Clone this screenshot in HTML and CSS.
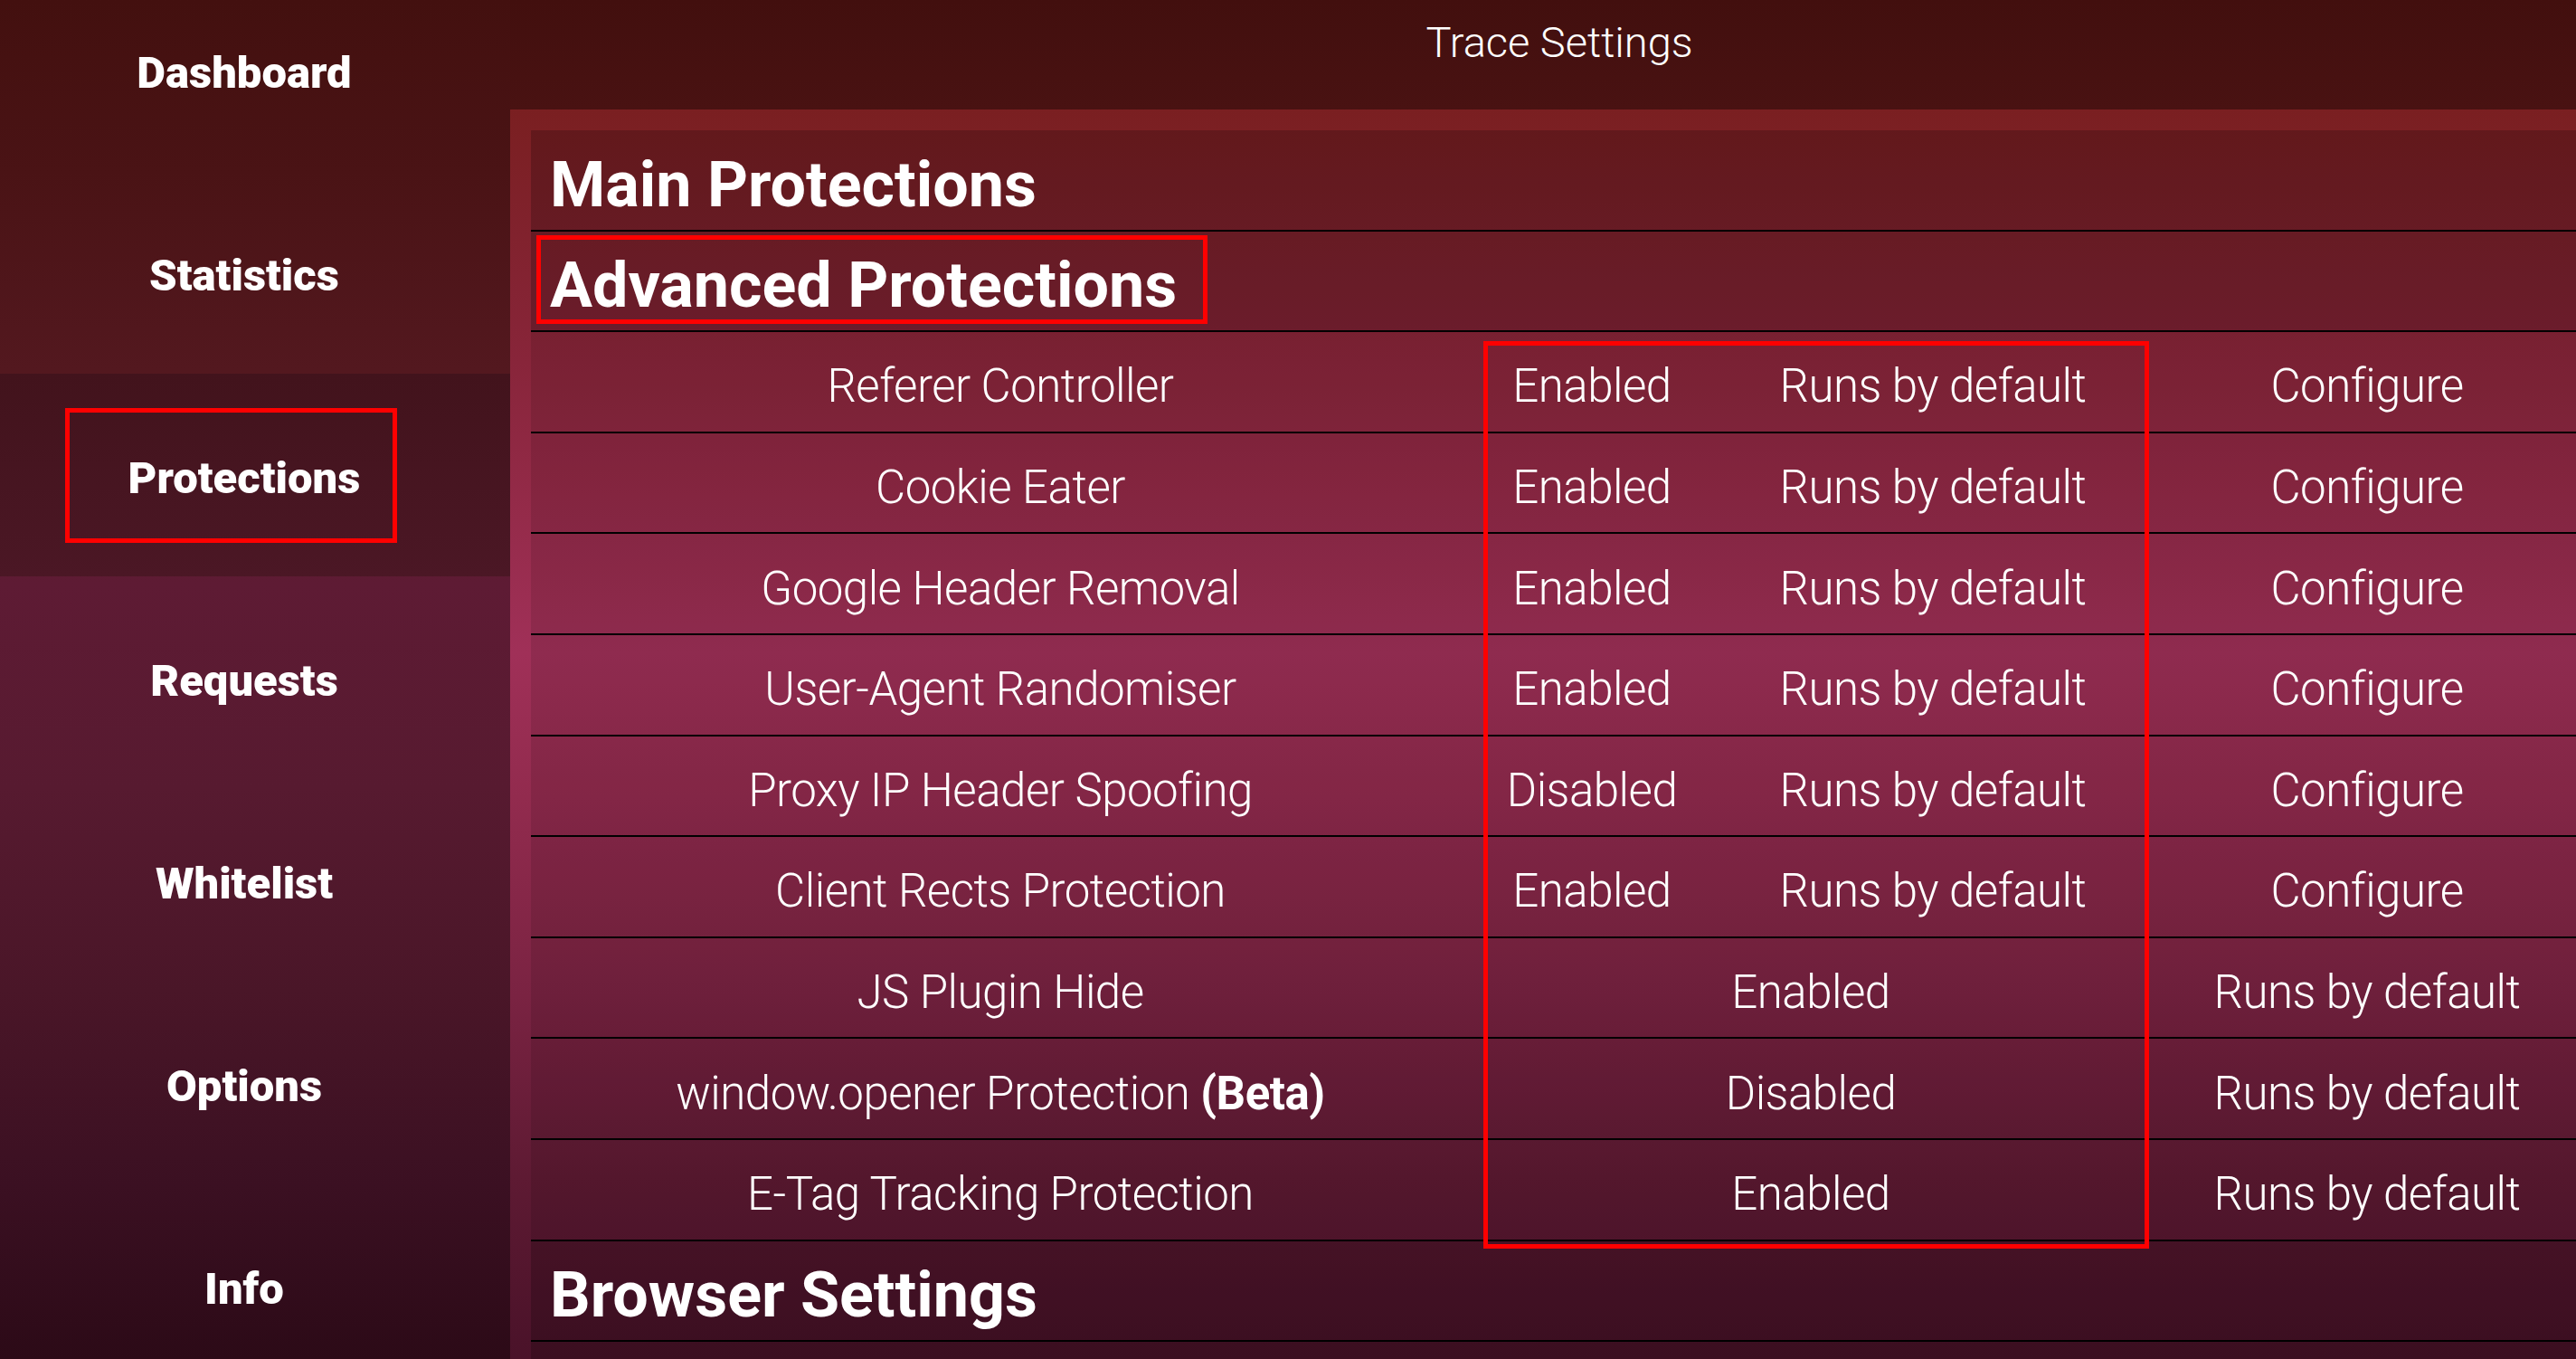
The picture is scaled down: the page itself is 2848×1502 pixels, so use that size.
FILE: index.html
```html
<!DOCTYPE html>
<html lang="en">
<head>
<meta charset="utf-8">
<title>Trace Settings</title>
<link rel="stylesheet" href="styles.css">
</head>
<body>
<div class="app">
  <nav class="sidebar">
    <div class="nav-item nav-first">Dashboard</div>
    <div class="nav-item">Statistics</div>
    <div class="nav-item active">Protections</div>
    <div class="nav-item">Requests</div>
    <div class="nav-item">Whitelist</div>
    <div class="nav-item">Options</div>
    <div class="nav-item">Info</div>
  </nav>
  <main class="main">
    <header class="topbar">Trace Settings</header>
    <section class="panel">
      <div class="table">
        <div class="row heading">Main Protections</div>
        <div class="row heading">Advanced Protections</div>
        <div class="row">
          <div class="cell">Referer Controller</div>
          <div class="cell">Enabled</div>
          <div class="cell">Runs by default</div>
          <div class="cell">Configure</div>
        </div>
        <div class="row">
          <div class="cell">Cookie Eater</div>
          <div class="cell">Enabled</div>
          <div class="cell">Runs by default</div>
          <div class="cell">Configure</div>
        </div>
        <div class="row">
          <div class="cell">Google Header Removal</div>
          <div class="cell">Enabled</div>
          <div class="cell">Runs by default</div>
          <div class="cell">Configure</div>
        </div>
        <div class="row">
          <div class="cell">User-Agent Randomiser</div>
          <div class="cell">Enabled</div>
          <div class="cell">Runs by default</div>
          <div class="cell">Configure</div>
        </div>
        <div class="row">
          <div class="cell">Proxy IP Header Spoofing</div>
          <div class="cell">Disabled</div>
          <div class="cell">Runs by default</div>
          <div class="cell">Configure</div>
        </div>
        <div class="row">
          <div class="cell">Client Rects Protection</div>
          <div class="cell">Enabled</div>
          <div class="cell">Runs by default</div>
          <div class="cell">Configure</div>
        </div>
        <div class="row">
          <div class="cell">JS Plugin Hide</div>
          <div class="cell span2">Enabled</div>
          <div class="cell">Runs by default</div>
        </div>
        <div class="row">
          <div class="cell">window.opener Protection <b>(Beta)</b></div>
          <div class="cell span2">Disabled</div>
          <div class="cell">Runs by default</div>
        </div>
        <div class="row">
          <div class="cell">E-Tag Tracking Protection</div>
          <div class="cell span2">Enabled</div>
          <div class="cell">Runs by default</div>
        </div>
        <div class="row heading">Browser Settings</div>
        <div class="row heading"></div>
      </div>
    </section>
  </main>
</div>
<div class="mark mark-nav"></div>
<div class="mark mark-heading"></div>
<div class="mark mark-status"></div>
</body>
</html>
```
FILE: styles.css
```css
html, body {
  margin: 0;
  padding: 0;
}
body {
  width: 2848px;
  height: 1502px;
  overflow: hidden;
  background: #43100f;
  color: #ffffff;
  font-family: Roboto, "Noto Sans", "Liberation Sans", sans-serif;
  position: relative;
}
.app {
  display: flex;
  width: 2848px;
  height: 1502px;
}
.sidebar {
  width: 564px;
  flex: none;
  height: 1502px;
  overflow: hidden;
  display: flex;
  flex-direction: column;
  background: linear-gradient(to bottom,
    #43100f 0px,
    #4a1315 190px,
    #53181f 410px,
    #5e1b34 645px,
    #571a30 870px,
    #4a1628 1095px,
    #3b1022 1310px,
    #2c0a17 1502px);
}
.nav-item {
  flex: none;
  height: 224px;
  box-sizing: border-box;
  padding: 6px 24px 0 0;
  display: flex;
  align-items: center;
  justify-content: center;
  font-size: 49px;
  font-weight: 900;
  line-height: 1;
}
.nav-first {
  height: 189px;
  padding-bottom: 35px;
}
.nav-item.active {
  background: linear-gradient(to bottom, #42131c, #4b1725);
}
.main {
  flex: 1;
  min-width: 0;
  display: flex;
  flex-direction: column;
  height: 1502px;
}
.topbar {
  flex: none;
  height: 121px;
  box-sizing: border-box;
  padding: 23px 0 0 36px;
  text-align: center;
  font-size: 47px;
  font-weight: 300;
  line-height: 47px;
  background: linear-gradient(to bottom, #420f0e, #491212);
}
.panel {
  flex: 1;
  padding: 23px 0 0 23px;
  overflow: hidden;
  background: linear-gradient(to bottom,
    #7a1f21 0px,
    #88253a 280px,
    #a03058 600px,
    #922b4e 760px,
    #7a2342 980px,
    #5e1a33 1180px,
    #4a1229 1381px);
}
.table {
  width: 2268px;
}
.row {
  height: 111.6px;
  box-sizing: border-box;
  border-bottom: 2px solid #000;
  padding-top: 10px;
  display: grid;
  grid-template-columns: 1038px 270px 484px 476px;
  align-items: center;
  background: rgba(0, 0, 0, 0.1);
  font-size: 51px;
  font-weight: 300;
  letter-spacing: -0.5px;
  line-height: 1;
}
.row.heading {
  display: flex;
  align-items: center;
  padding: 10px 0 0 21px;
  background: rgba(0, 0, 0, 0.2);
  font-size: 70px;
  font-weight: 700;
  letter-spacing: 0;
}
.cell {
  text-align: center;
  white-space: nowrap;
}
.cell b {
  font-weight: 700;
}
.span2 {
  grid-column: span 2;
}
.mark {
  position: absolute;
  box-sizing: border-box;
  border: 5px solid #ff0000;
}
.mark-nav {
  left: 72px;
  top: 451px;
  width: 367px;
  height: 149px;
}
.mark-heading {
  left: 593px;
  top: 260px;
  width: 742px;
  height: 98px;
}
.mark-status {
  left: 1640px;
  top: 377px;
  width: 736px;
  height: 1003px;
}
```
